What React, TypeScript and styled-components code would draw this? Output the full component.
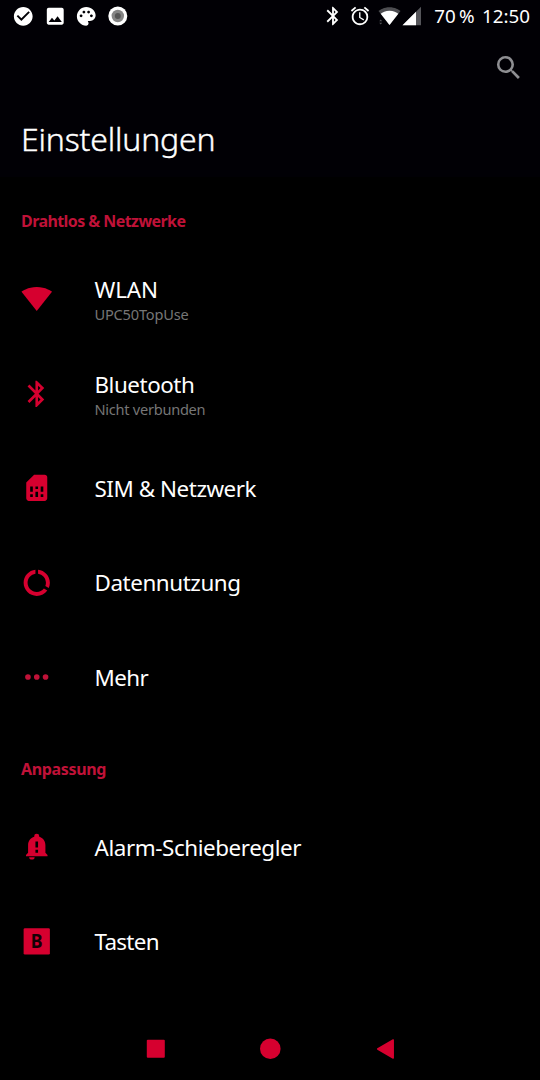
import React from "react";
import styled, { createGlobalStyle } from "styled-components";
import { MdAlarm, MdBluetooth, MdCheckCircle, MdDataUsage, MdImage, MdPalette, MdSearch } from "react-icons/md";

const RED = "#d6002f";

const GlobalStyle = createGlobalStyle`
  * { box-sizing: border-box; }
  body { margin: 0; background: #000; }
`;

const Screen = styled.div`
  display: flex;
  flex-direction: column;
  width: 540px;
  height: 1080px;
  overflow: hidden;
  background: #000;
  color: #fff;
  font-family: "Noto Sans", "Open Sans", sans-serif;
`;

const TopArea = styled.header`
  height: 176.5px;
  flex: none;
  background: #010005;
`;

const StatusBar = styled.div`
  display: flex;
  justify-content: space-between;
  align-items: center;
  height: 32px;
  padding: 0 10px 0 12px;
`;

const Notifications = styled.div`
  display: flex;
  gap: 9px;
  svg { display: block; }
`;

const Indicators = styled.div`
  display: flex;
  align-items: center;
  svg { display: block; }
`;

const AlarmIcon = styled(MdAlarm)`
  margin: 0 7px 0 5px;
`;

const StatusText = styled.span<{ $gap: number }>`
  margin-left: ${(p) => p.$gap}px;
  font-size: 18.8px;
  line-height: 32px;
  white-space: pre;
`;

const ActionBar = styled.div`
  display: flex;
  justify-content: flex-end;
  align-items: center;
  height: 72px;
  padding-right: 16px;
  color: #8e8e92;
`;

const PageTitle = styled.h1`
  margin: 11px 0 0 21px;
  font-size: 32px;
  line-height: 48px;
  font-weight: 300;
  letter-spacing: -0.18px;
  -webkit-text-stroke: 0.4px #fff;
`;

const Content = styled.main`
  flex: 1;
`;

const SectionTitle = styled.h2<{ $track: number }>`
  height: 75.5px;
  margin: 0;
  padding: 32px 0 0 21px;
  font-size: 16px;
  line-height: 24px;
  font-weight: 700;
  color: #c01238;
  letter-spacing: ${(p) => p.$track}px;
`;

const Row = styled.div`
  display: flex;
  align-items: center;
  height: 94.5px;
  padding-left: 21px;
`;

const RowIcon = styled.div`
  width: 73.5px;
  flex: none;
  margin-top: -1px;
  color: ${RED};
  svg { display: block; }
`;

const RowTitle = styled.div<{ $track: number }>`
  padding-top: 1px;
  font-size: 22.4px;
  line-height: 30px;
  font-weight: 400;
  white-space: nowrap;
  letter-spacing: ${(p) => p.$track}px;
`;

const RowSummary = styled.div<{ $track: number }>`
  margin-top: -1px;
  font-size: 14.6px;
  line-height: 20px;
  color: #767676;
  white-space: nowrap;
  letter-spacing: ${(p) => p.$track}px;
`;

const NavBar = styled.nav`
  display: flex;
  flex: none;
  height: 63px;
  padding: 0 97px 0 98px;
  justify-content: space-between;
  align-items: center;
  svg { display: block; }
`;

const I = 31.5;

const WifiFull = () => (
  <svg width={I} height={I} viewBox="0 0 24 24" fill="currentColor">
    <path d="M12 21.400 23.600 6.700C23.100 6.300 18.800 3.100 12 3.100S.9 6.300.4 6.700L12 21.400z" />
  </svg>
);

const SimIcon = () => (
  <svg width={I} height={I} viewBox="0 0 24 24" fill="currentColor" fillRule="evenodd">
    <path d="M18 2H10L4 8v12c0 1.100.9 2 2 2h12c1.100 0 2-.9 2-2V4c0-1.100-.9-2-2-2zM9 19H7v-2h2v2zm8 0h-2v-2h2v2zm-8-4H7v-4h2v4zm4 4h-2v-4h2v4zm0-6h-2v-2h2v2zm4 2h-2v-4h2v4z" />
  </svg>
);

const DotsIcon = () => (
  <svg width={I} height={I} viewBox="0 0 24 24" fill="#c01238">
    <circle cx="5.300" cy="12.200" r="2.150" />
    <circle cx="12" cy="12.200" r="2.150" />
    <circle cx="18.700" cy="12.200" r="2.150" />
  </svg>
);

const BellIcon = () => (
  <svg width={I} height={I} viewBox="0 0 24 24" fill="currentColor" fillRule="evenodd">
    <path d="M18.600 16.500V10.800c0-3.100-1.900-5.600-4.700-6.400V4a1.900 1.900 0 0 0-3.800 0v.4C7.300 5.200 5.400 7.700 5.400 10.800v5.700L3.800 18.200v1.100h16.400v-1.100zM11 8h2v4.500h-2zM11 14.300h2v2.200h-2z" />
    <path d="M6.200 20h4.200a2.100 1.800 0 0 1-4.200 0z" />
  </svg>
);

const ButtonsIcon = () => (
  <svg width={I} height={I} viewBox="0 0 24 24">
    <rect x="2" y="1.700" width="20" height="20" rx="1" fill="currentColor" />
    <text x="12" y="17" textAnchor="middle" fontFamily="Noto Sans" fontWeight="700" fontSize="14.600" textLength="9" lengthAdjust="spacingAndGlyphs" fill="#140005">B</text>
  </svg>
);

const RecordIcon = () => (
  <svg width="22" height="22" viewBox="0 0 22 22">
    <circle cx="10.800" cy="11" r="9.500" fill="#fff" />
    <circle cx="10.800" cy="11" r="6.200" fill="#858585" />
    <circle cx="10.800" cy="11" r="3" fill="#555" />
  </svg>
);

const WifiStatus = () => (
  <svg width="24" height="20" viewBox="0 0 24 20">
    <path d="M11.500 19 22.500 5C21 3.700 17 1.200 11.500 1.200S2 3.700.5 5z" fill="#4d4d51" />
    <path d="M11.500 19 20.300 7.700C18.500 6.200 15.500 4.700 11.500 4.700S4.500 6.200 2.700 7.700z" fill="#fff" />
    <path d="M1.200 15.200 2.700 13.400 4.200 15.200zM1.200 16.800 2.700 18.600 4.200 16.800z" fill="#55555a" />
  </svg>
);

const SignalStatus = () => (
  <svg width="20" height="20" viewBox="0 0 20 20">
    <path d="M.5 19.200 19 .7V19.200z" fill="#55555a" />
    <path d="M.5 19.200 14 5.700V19.200z" fill="#fff" />
  </svg>
);

type Item = { icon: React.ReactNode; title: string; track: number; summary?: string; summaryTrack?: number };

const network: Item[] = [
  { icon: <WifiFull />, title: "WLAN", track: -0.1, summary: "UPC50TopUse", summaryTrack: -0.2 },
  { icon: <MdBluetooth size={I} />, title: "Bluetooth", track: -0.45, summary: "Nicht verbunden", summaryTrack: -0.27 },
  { icon: <SimIcon />, title: "SIM & Netzwerk", track: -0.45 },
  { icon: <MdDataUsage size={I} />, title: "Datennutzung", track: -0.42 },
  { icon: <DotsIcon />, title: "Mehr", track: -0.6 },
];

const customization: Item[] = [
  { icon: <BellIcon />, title: "Alarm-Schieberegler", track: -0.42 },
  { icon: <ButtonsIcon />, title: "Tasten", track: -0.7 },
];

const SettingRow = ({ item }: { item: Item }) => (
  <Row>
    <RowIcon>{item.icon}</RowIcon>
    <div>
      <RowTitle $track={item.track}>{item.title}</RowTitle>
      {item.summary && <RowSummary $track={item.summaryTrack ?? 0}>{item.summary}</RowSummary>}
    </div>
  </Row>
);

export default function App() {
  return (
    <Screen>
      <GlobalStyle />
      <TopArea>
        <StatusBar>
          <Notifications>
            <MdCheckCircle size={22.500} />
            <MdImage size={22.500} />
            <MdPalette size={22.500} />
            <RecordIcon />
          </Notifications>
          <Indicators>
            <MdBluetooth size={22} />
            <AlarmIcon size={22} />
            <WifiStatus />
            <SignalStatus />
            <StatusText $gap={12}>70{"\u2009"}%</StatusText>
            <StatusText $gap={7.5}>12:50</StatusText>
          </Indicators>
        </StatusBar>
        <ActionBar>
          <MdSearch size={I} />
        </ActionBar>
        <PageTitle>Einstellungen</PageTitle>
      </TopArea>
      <Content>
        <SectionTitle $track={-0.57}>Drahtlos &amp; Netzwerke</SectionTitle>
        {network.map((item) => <SettingRow key={item.title} item={item} />)}
        <SectionTitle $track={-0.35}>Anpassung</SectionTitle>
        {customization.map((item) => <SettingRow key={item.title} item={item} />)}
      </Content>
      <NavBar>
        <svg width="116" height="24" viewBox="0 0 116 24" fill={RED}>
          <rect x="48.800" y="2.800" width="18" height="18" rx="1" />
        </svg>
        <svg width="115" height="24" viewBox="0 0 115 24" fill={RED}>
          <circle cx="56.300" cy="11.800" r="10.300" />
        </svg>
        <svg width="114" height="24" viewBox="0 0 114 24" fill={RED}>
          <path d="M48.700 12 64.200 3v18z" stroke={RED} strokeWidth="1.500" strokeLinejoin="round" />
        </svg>
      </NavBar>
    </Screen>
  );
}
